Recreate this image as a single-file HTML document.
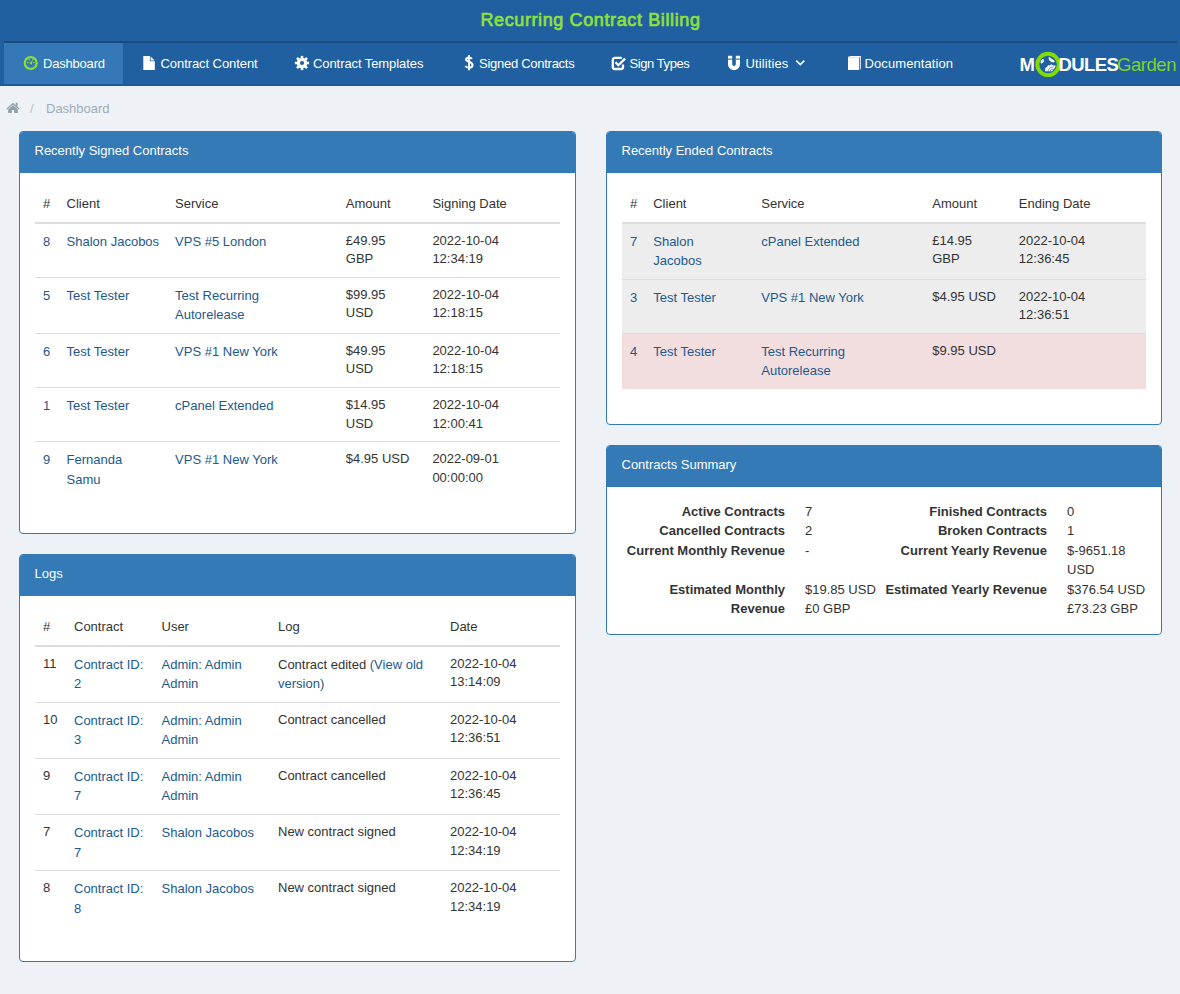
<!DOCTYPE html>
<html><head><meta charset="utf-8"><title>Recurring Contract Billing</title>
<style>
*{box-sizing:border-box}
html,body{margin:0;padding:0}
body{width:1180px;height:994px;overflow:hidden;position:relative;background:#eef1f6;font-family:"Liberation Sans",sans-serif;font-size:13px;color:#333;line-height:18.57px}
a{color:#22598d;text-decoration:none;line-height:19.5px}
.hdr{position:absolute;left:0;top:0;width:1180px;height:86px;background:#2160a0}
.hdr .title{position:absolute;left:0;top:8px;width:1180px;text-align:center;font-weight:normal;font-size:18px;line-height:24px;color:#8ee03c;padding-left:1px;letter-spacing:0.62px;-webkit-text-stroke:0.7px #8ee03c}
.hdr .line{position:absolute;left:4px;top:41px;width:1173px;height:2px;background:#1d4b7e}
.hdr .bot{position:absolute;left:0;top:84px;width:1180px;height:2px;background:#1f5895}
.hdr .act{position:absolute;left:4px;top:43px;width:119px;height:41px;background:#3478b7}
.nav{position:absolute;top:56px;height:15px;line-height:15px;color:#fff;font-size:13px;white-space:nowrap;letter-spacing:-0.2px}
.ico{position:absolute}
.bc{position:absolute;top:100px;left:46px;color:#9eacb8;line-height:18px}
.panel{position:absolute;background:#fff;border:1px solid #337ab7;border-radius:4px}
.ph{background:#337ab7;color:#fff;height:41px;padding:10px 15px 0 14.5px;line-height:18.57px;border-radius:3px 3px 0 0}
.pb{padding:14px 15px 15px}
table{border-collapse:collapse;width:100%;margin-bottom:20px}
th{text-align:left;font-weight:normal;padding:8px;vertical-align:bottom;border-bottom:2px solid #ddd;white-space:nowrap}
td{padding:8px;vertical-align:top;border-top:1px solid #ddd;white-space:nowrap}
tr:first-child td{border-top:0}
tr.gr td{background:#ededed}
tr.rd td{background:#f2dede}
.sum{position:absolute;line-height:19.4px;white-space:nowrap}
.sum b{font-weight:bold}
</style></head><body>
<div class="hdr">
  <div class="title">Recurring Contract Billing</div>
  <div class="line"></div>
  <div class="act"></div>
  <div class="bot"></div>
</div>

<!-- nav icons -->
<svg class="ico" style="left:23px;top:55px" width="16" height="16" viewBox="0 0 16 16">
  <circle cx="7.7" cy="8" r="5.95" fill="none" stroke="#8ee02e" stroke-width="2.2"/>
  <rect x="5.55" y="3.7" width="1.1" height="1.8" fill="#8ee02e" transform="rotate(-30 6.1 4.6)"/>
  <rect x="9.25" y="3.7" width="1.1" height="1.8" fill="#8ee02e" transform="rotate(30 9.8 4.6)"/>
  <rect x="4" y="7" width="1.7" height="1.05" fill="#8ee02e"/>
  <rect x="10.05" y="7" width="1.7" height="1.05" fill="#8ee02e"/>
  <circle cx="8" cy="8.3" r="1.15" fill="#8ee02e"/>
  <path d="M7.1 8 L8.9 8.3 L9.6 5 Z" fill="#8ee02e"/>
</svg>
<div class="nav" style="left:43px">Dashboard</div>

<svg class="ico" style="left:143px;top:56px" width="12" height="14" viewBox="0 0 12 14">
  <path d="M0.3 0 H6.9 V5.2 H11.8 V14 H0.3 Z" fill="#fff"/>
  <path d="M7.6 0.4 L11.6 4.6 H7.6 Z" fill="#fff"/>
</svg>
<div class="nav" style="left:160.5px;letter-spacing:-0.07px">Contract Content</div>

<svg class="ico" style="left:294px;top:55px" width="16" height="16" viewBox="0 0 16 16">
  <g fill="#fff" transform="translate(8 8)">
    <rect x="-1.25" y="-7.1" width="2.5" height="14.2"/>
    <rect x="-1.25" y="-7.1" width="2.5" height="14.2" transform="rotate(45)"/>
    <rect x="-1.25" y="-7.1" width="2.5" height="14.2" transform="rotate(90)"/>
    <rect x="-1.25" y="-7.1" width="2.5" height="14.2" transform="rotate(135)"/>
  </g>
  <circle cx="8" cy="8" r="5.3" fill="#fff"/>
  <circle cx="8" cy="8" r="2.1" fill="#2160a0"/>
</svg>
<div class="nav" style="left:313px;letter-spacing:-0.08px">Contract Templates</div>

<svg class="ico" style="left:463px;top:54px" width="12" height="17" viewBox="0 0 12 17">
  <path d="M8.9 4.8 C8.2 3.9 7.1 3.6 6 3.6 C4.2 3.6 3.1 4.4 3.1 5.6 C3.1 8.3 9.5 7.3 9.5 11 C9.5 12.7 7.9 13.7 6 13.7 C4.5 13.7 3.2 13.1 2.4 12" fill="none" stroke="#fff" stroke-width="2.1"/>
  <rect x="5.1" y="1" width="1.8" height="15.3" fill="#fff"/>
</svg>
<div class="nav" style="left:479px;letter-spacing:-0.27px">Signed Contracts</div>

<svg class="ico" style="left:611px;top:56px" width="16" height="15" viewBox="0 0 16 15">
  <path d="M10.8 1.9 H3.8 C2.6 1.9 1.8 2.7 1.8 3.9 V11 C1.8 12.2 2.6 13 3.8 13 H10 C11.2 13 12 12.2 12 11 V8.5" fill="none" stroke="#fff" stroke-width="2.3"/>
  <path d="M4.5 6.2 L7.4 9.2 L14 2.6" fill="none" stroke="#fff" stroke-width="2.3"/>
</svg>
<div class="nav" style="left:629.5px;letter-spacing:-0.42px">Sign Types</div>

<svg class="ico" style="left:727px;top:55px" width="15" height="16" viewBox="0 0 15 16">
  <path d="M1 0.8 H5.2 V9 C5.2 10.3 6 11 7 11 C8 11 8.8 10.3 8.8 9 V0.8 H13 V9 C13 12.6 10.4 15 7 15 C3.6 15 1 12.6 1 9 Z" fill="#fff"/>
  <rect x="1" y="3.6" width="4.2" height="1" fill="#2160a0"/>
  <rect x="8.8" y="3.6" width="4.2" height="1" fill="#2160a0"/>
</svg>
<div class="nav" style="left:745.5px;letter-spacing:0.11px">Utilities</div>
<svg class="ico" style="left:795px;top:59px" width="11" height="8" viewBox="0 0 11 8">
  <path d="M1.3 1.6 L5.3 5.6 L9.3 1.6" fill="none" stroke="#fff" stroke-width="1.6"/>
</svg>

<svg class="ico" style="left:847px;top:55px" width="15" height="16" viewBox="0 0 15 16">
  <path d="M2.5 1 H13.8 V13.8 L12.8 14.8 V2.2 H3.2 Z" fill="#fff"/>
  <path d="M1 2.6 C1 1.8 1.6 1.2 2.4 1.2 L2.4 2.2 H12 V15 H1 Z" fill="#fff"/>
</svg>
<div class="nav" style="left:864.5px;letter-spacing:0.09px">Documentation</div>

<!-- logo -->
<div style="position:absolute;left:1019.6px;top:54.5px;font-weight:bold;font-size:18.5px;line-height:20px;color:#fff">M</div>
<svg class="ico" style="left:1034px;top:51px" width="28" height="28" viewBox="0 0 28 28">
  <circle cx="14.05" cy="13.45" r="10.7" fill="none" stroke="#82dc00" stroke-width="3.9"/>
  <path d="M6.5 11.8 L7.6 12.7 L9.9 10.7 L9.9 8.2 L8.7 7.9 L6.8 9.6 Z" fill="#e8eef6"/>
  <path d="M14.4 6.5 L15.8 6.2 L16.9 7.6 L18.6 8.2 L20.8 10.1 L20.3 11.3 L17.5 11.3 L15.2 9.3 Z" fill="#fff"/>
  <path d="M11 20.3 L11.3 16.9 L13.2 15.8 L14.1 14.1 L15.8 14.4 L17.5 13.2 L19.2 14.6 L21.7 14.4 L20.8 16.9 L19.7 18.3 L18 20.3 Z" fill="#fff"/>
  <path d="M14 20.5 A5 5 0 0 1 19.5 16" fill="none" stroke="#2160a0" stroke-width="0.7"/>
  <path d="M16 20.5 A3 3 0 0 1 19.5 18" fill="none" stroke="#2160a0" stroke-width="0.7"/>
</svg>
<div style="position:absolute;left:1058.5px;top:54.5px;font-weight:bold;font-size:18.5px;line-height:20px;color:#fff;letter-spacing:-0.6px">DULES</div>
<div style="position:absolute;left:1117px;top:55.3px;font-size:18.5px;line-height:20px;color:#7fd327;letter-spacing:-0.45px">Garden</div>

<!-- breadcrumb -->
<svg class="ico" style="left:6px;top:102px" width="14" height="12" viewBox="0 0 14 12">
  <path d="M7 0.8 L0.3 6.8 L1.2 7.6 L7 2.5 L12.8 7.6 L13.7 6.8 L11.5 4.8 V0.8 H9.8 V3.3 Z" fill="#8fa1aa"/>
  <path d="M2.2 7.2 L7 3.2 L11.8 7.2 V11 H8.2 V8 H5.8 V11 H2.2 Z" fill="#8fa1aa"/>
</svg>
<div class="bc" style="left:30px;color:#b4c0c9">/</div>
<div class="bc">Dashboard</div>

<!-- Recently Signed Contracts -->
<div class="panel" style="left:19px;top:131px;width:557px;height:403px">
  <div class="ph">Recently Signed Contracts</div>
  <div class="pb">
  <table>
    <colgroup><col style="width:23.6px"><col style="width:108.4px"><col style="width:170.7px"><col style="width:86.6px"><col></colgroup>
    <tr><th>#</th><th>Client</th><th>Service</th><th>Amount</th><th>Signing Date</th></tr>
    <tr><td><a>8</a></td><td><a>Shalon Jacobos</a></td><td><a>VPS #5 London</a></td><td>£49.95<br>GBP</td><td>2022-10-04<br>12:34:19</td></tr>
    <tr><td><a>5</a></td><td><a>Test Tester</a></td><td><a>Test Recurring<br>Autorelease</a></td><td>$99.95<br>USD</td><td>2022-10-04<br>12:18:15</td></tr>
    <tr><td><a>6</a></td><td><a>Test Tester</a></td><td><a>VPS #1 New York</a></td><td>$49.95<br>USD</td><td>2022-10-04<br>12:18:15</td></tr>
    <tr><td><a>1</a></td><td><a>Test Tester</a></td><td><a>cPanel Extended</a></td><td>$14.95<br>USD</td><td>2022-10-04<br>12:00:41</td></tr>
    <tr><td><a>9</a></td><td><a>Fernanda<br>Samu</a></td><td><a>VPS #1 New York</a></td><td>$4.95 USD</td><td>2022-09-01<br>00:00:00</td></tr>
  </table>
  </div>
</div>

<!-- Recently Ended Contracts -->
<div class="panel" style="left:606px;top:131px;width:556px;height:294px">
  <div class="ph">Recently Ended Contracts</div>
  <div class="pb">
  <table>
    <colgroup><col style="width:23px"><col style="width:108px"><col style="width:171px"><col style="width:86.6px"><col></colgroup>
    <tr><th>#</th><th>Client</th><th>Service</th><th>Amount</th><th>Ending Date</th></tr>
    <tr class="gr"><td><a>7</a></td><td><a>Shalon<br>Jacobos</a></td><td><a>cPanel Extended</a></td><td>£14.95<br>GBP</td><td>2022-10-04<br>12:36:45</td></tr>
    <tr class="gr"><td><a>3</a></td><td><a>Test Tester</a></td><td><a>VPS #1 New York</a></td><td>$4.95 USD</td><td>2022-10-04<br>12:36:51</td></tr>
    <tr class="rd"><td><a>4</a></td><td><a>Test Tester</a></td><td><a>Test Recurring<br>Autorelease</a></td><td>$9.95 USD</td><td></td></tr>
  </table>
  </div>
</div>

<!-- Contracts Summary -->
<div class="panel" style="left:606px;top:445px;width:556px;height:190px">
  <div class="ph">Contracts Summary</div>
</div>
<div class="sum" style="left:600px;top:502px;width:185px;text-align:right"><b>Active Contracts<br>Cancelled Contracts<br>Current Monthly Revenue<br><br>Estimated Monthly<br>Revenue</b></div>
<div class="sum" style="left:805px;top:502px">7<br>2<br>-<br><br>$19.85 USD<br>£0 GBP</div>
<div class="sum" style="left:860px;top:502px;width:187px;text-align:right"><b>Finished Contracts<br>Broken Contracts<br>Current Yearly Revenue<br><br>Estimated Yearly Revenue</b></div>
<div class="sum" style="left:1067px;top:502px">0<br>1<br>$-9651.18<br>USD<br>$376.54 USD<br>£73.23 GBP</div>

<!-- Logs -->
<div class="panel" style="left:19px;top:554px;width:557px;height:408px">
  <div class="ph">Logs</div>
  <div class="pb">
  <table>
    <colgroup><col style="width:31px"><col style="width:87.5px"><col style="width:116.5px"><col style="width:172px"><col></colgroup>
    <tr><th>#</th><th>Contract</th><th>User</th><th>Log</th><th>Date</th></tr>
    <tr><td>11</td><td><a>Contract ID:<br>2</a></td><td><a>Admin: Admin<br>Admin</a></td><td>Contract edited <a>(View old<br>version)</a></td><td>2022-10-04<br>13:14:09</td></tr>
    <tr><td>10</td><td><a>Contract ID:<br>3</a></td><td><a>Admin: Admin<br>Admin</a></td><td>Contract cancelled</td><td>2022-10-04<br>12:36:51</td></tr>
    <tr><td>9</td><td><a>Contract ID:<br>7</a></td><td><a>Admin: Admin<br>Admin</a></td><td>Contract cancelled</td><td>2022-10-04<br>12:36:45</td></tr>
    <tr><td>7</td><td><a>Contract ID:<br>7</a></td><td><a>Shalon Jacobos</a></td><td>New contract signed</td><td>2022-10-04<br>12:34:19</td></tr>
    <tr><td>8</td><td><a>Contract ID:<br>8</a></td><td><a>Shalon Jacobos</a></td><td>New contract signed</td><td>2022-10-04<br>12:34:19</td></tr>
  </table>
  </div>
</div>

</body></html>
